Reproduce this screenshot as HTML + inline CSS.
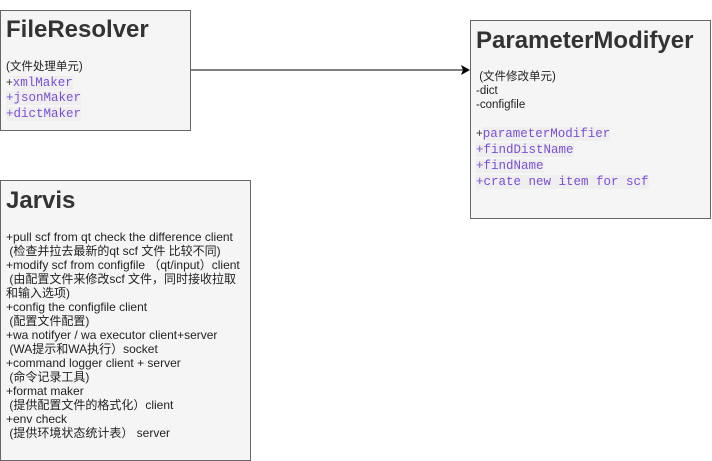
<!DOCTYPE html>
<html><head><meta charset="utf-8"><style>
body{margin:0;width:712px;height:461px;background:#fff;position:relative;overflow:hidden;font-family:"Liberation Sans","Noto Sans CJK SC",sans-serif;color:#222}
.box{position:absolute;background:#f5f5f5;border:1px solid #666;box-sizing:border-box}
.t{position:absolute;left:5px;font-weight:bold;font-size:24px;color:#333;white-space:nowrap}
.l{position:absolute;left:5px;font-size:11.5px;line-height:14px;white-space:nowrap}
.m{font-family:"Liberation Mono",monospace;font-size:12.5px;color:#7a4fd6;background:#efefef}
.p{color:#333}
</style></head><body>
<div class="box" style="left:0;top:10px;width:191px;height:121px">
<div class="t" style="top:5px">FileResolver</div>
<div class="l" style="top:49px;line-height:15.7px">(文件处理单元)<br><span class="p">+</span><span class="m">xmlMaker</span><br><span class="m">+jsonMaker</span><br><span class="m">+dictMaker</span></div>
</div>
<svg style="position:absolute;left:0;top:0" width="712" height="461"><line x1="191" y1="70" x2="463" y2="70" stroke="#000" stroke-width="1"/><path d="M470 70 L461 65 L463 70 L461 75Z" fill="#000"/></svg>
<div class="box" style="left:470px;top:20px;width:241px;height:199px">
<div class="t" style="top:6px">ParameterModifyer</div>
<div class="l" style="top:49px">&nbsp;(文件修改单元)<br>-dict<br>-configfile</div>
<div class="l" style="top:105px;line-height:16px"><span class="p">+</span><span class="m">parameterModifier</span><br><span class="m">+findDistName</span><br><span class="m">+findName</span><br><span class="m">+crate new item for scf </span></div>
</div>
<div class="box" style="left:0;top:180px;width:251px;height:281px">
<div class="t" style="top:6px">Jarvis</div>
<div class="l" style="top:49px;font-size:12px">+pull scf from qt check the difference client<br>&nbsp;(检查并拉去最新的qt scf 文件 比较不同)<br>+modify scf from configfile （qt/input）client<br>&nbsp;(由配置文件来修改scf 文件，同时接收拉取<br>和输入选项)<br>+config the configfile client<br>&nbsp;(配置文件配置)<br>+wa notifyer / wa executor client+server<br>&nbsp;(WA提示和WA执行）socket<br>+command logger client + server<br>&nbsp;(命令记录工具)<br>+format maker<br>&nbsp;(提供配置文件的格式化）client<br>+env check<br>&nbsp;(提供环境状态统计表） server</div>
</div>
</body></html>
